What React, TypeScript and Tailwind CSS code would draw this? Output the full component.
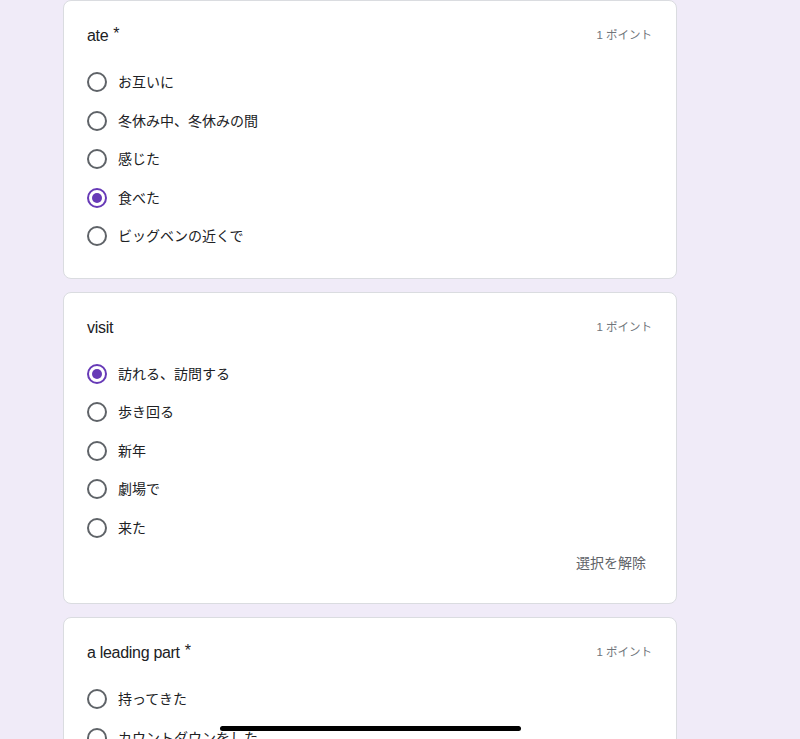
import React, { useState } from "react";

interface Question {
  id: string;
  title: string;
  required: boolean;
  options: string[];
  selected: number | null;
}

const initialQuestions: Question[] = [
  {
    id: "ate",
    title: "ate",
    required: true,
    options: ["お互いに", "冬休み中、冬休みの間", "感じた", "食べた", "ビッグベンの近くで"],
    selected: 3,
  },
  {
    id: "visit",
    title: "visit",
    required: false,
    options: ["訪れる、訪問する", "歩き回る", "新年", "劇場で", "来た"],
    selected: 0,
  },
  {
    id: "leading",
    title: "a leading part",
    required: true,
    options: ["持ってきた", "カウントダウンをした", "主役", "一緒に"],
    selected: null,
  },
];

function Radio({ checked }: { checked: boolean }) {
  return (
    <span
      className={`flex items-center justify-center w-5 h-5 rounded-full border-2 shrink-0 ${
        checked ? "border-[#673ab7]" : "border-[#5f6368]"
      }`}
    >
      {checked && <span className="w-[10px] h-[10px] rounded-full bg-[#673ab7]" />}
    </span>
  );
}

export default function App() {
  const [questions, setQuestions] = useState(initialQuestions);

  const select = (qi: number, oi: number | null) =>
    setQuestions((prev) => prev.map((q, i) => (i === qi ? { ...q, selected: oi } : q)));

  return (
    <div
      className="relative h-[739px] overflow-hidden bg-[#f0ebf8]"
      style={{ fontFamily: '"Liberation Sans", "Noto Sans CJK JP", sans-serif' }}
    >
      <div className="ml-[63px] w-[614px] flex flex-col gap-[13px]">
        {questions.map((q, qi) => (
          <div
            key={q.id}
            className={`bg-white border border-[#dadce0] rounded-lg pt-[23px] pl-[23px] pr-6 ${
              q.id === "visit" ? "pb-[20px]" : "pb-[22px]"
            }`}
          >
            {/* Question header */}
            <div className="flex items-center justify-between h-6">
              <div className="text-base text-[#202124] tracking-[-0.3px]">
                {q.title}
                {q.required && <span className="ml-[5px] relative -top-[2px] text-[#202124]">*</span>}
              </div>
              <div className="text-[11.5px] text-[#70757a]">1 ポイント</div>
            </div>

            {/* Options */}
            <div className="mt-[15px] flex flex-col">
              {q.options.map((opt, oi) => (
                <button
                  key={opt}
                  onClick={() => select(qi, oi)}
                  className="flex items-center gap-[11px] h-[38.5px] text-left"
                >
                  <Radio checked={q.selected === oi} />
                  <span className="text-sm text-[#202124]">{opt}</span>
                </button>
              ))}
            </div>

            {q.id === "visit" && (
              <div className="flex justify-end items-start h-9 pt-[6px]">
                <button
                  onClick={() => select(qi, null)}
                  className="px-[6px] text-sm leading-5 text-[#5f6368] rounded"
                >
                  選択を解除
                </button>
              </div>
            )}
          </div>
        ))}
      </div>

      {/* iOS home indicator */}
      <div className="absolute left-[220px] top-[726px] w-[301px] h-[5px] rounded-full bg-black" />
    </div>
  );
}
